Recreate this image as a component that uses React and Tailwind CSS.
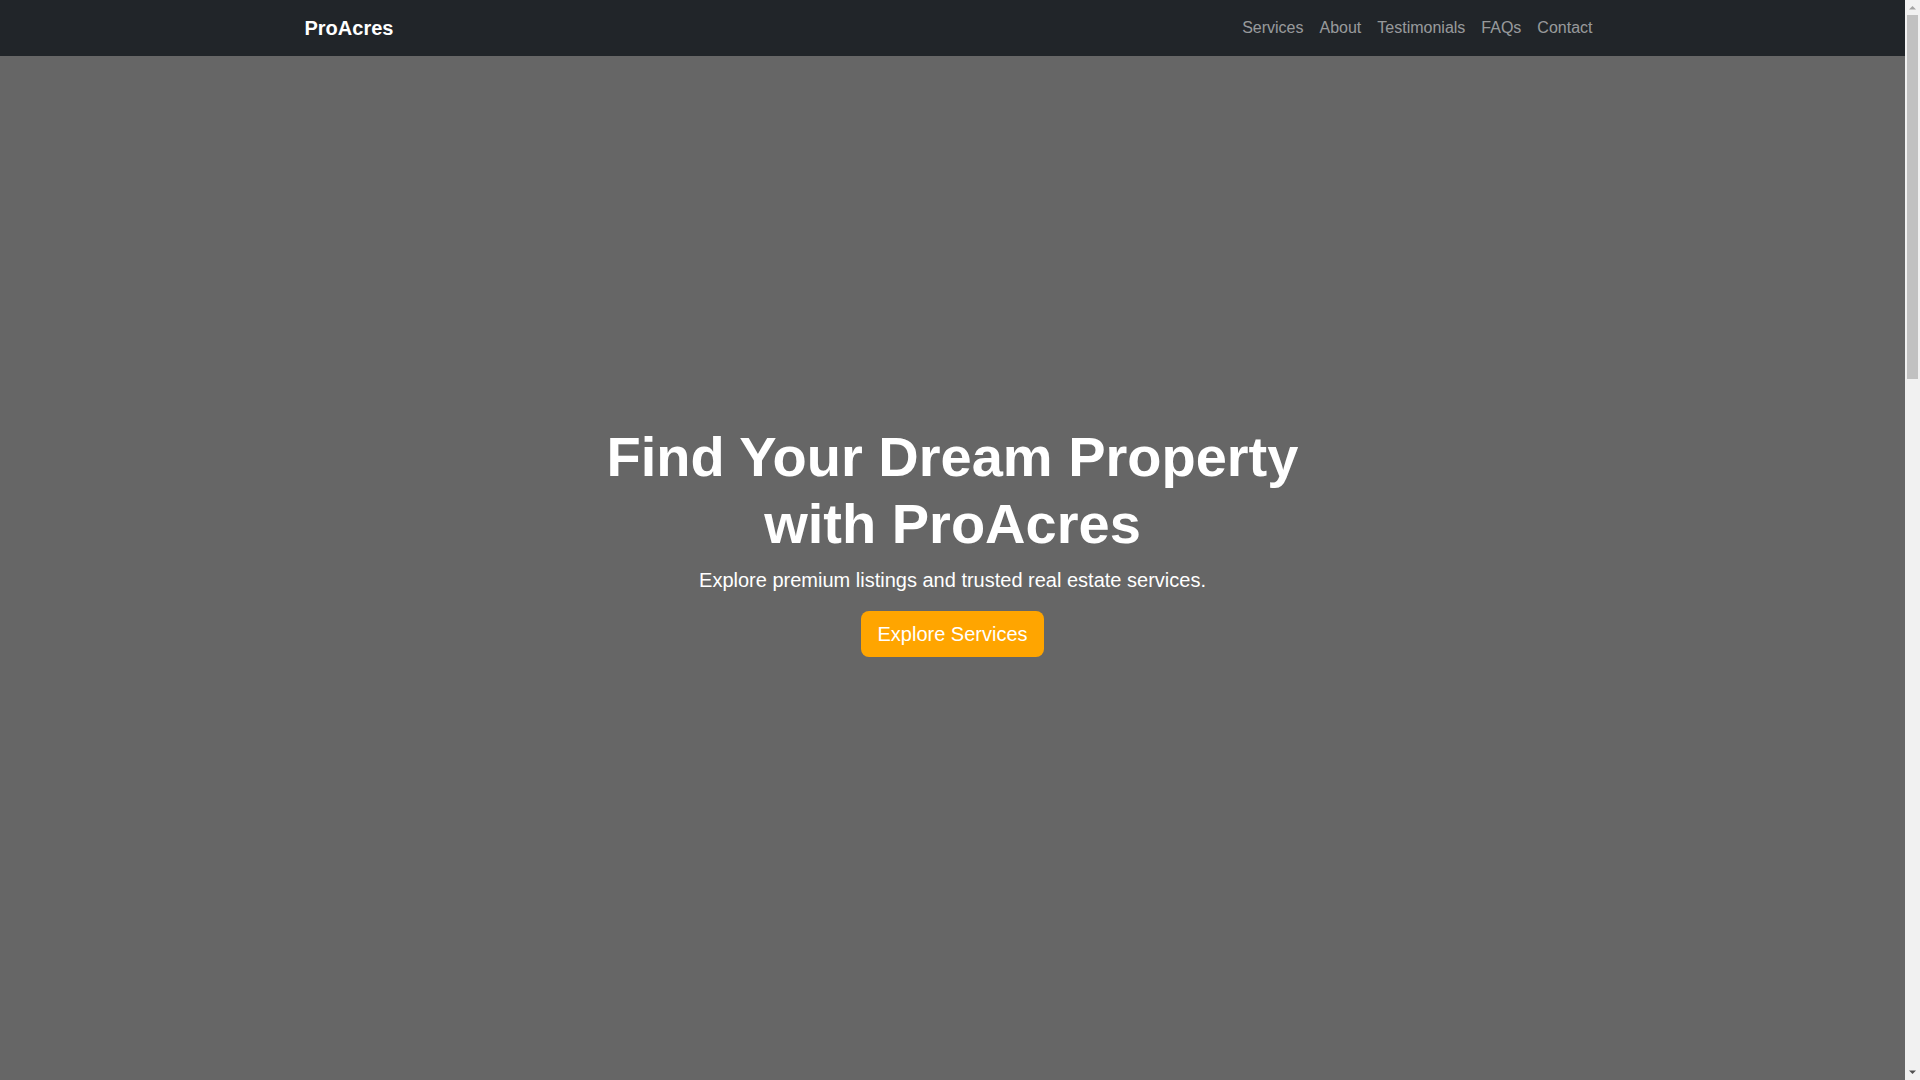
const navLinks = ['Services', 'About', 'Testimonials', 'FAQs', 'Contact'];

const services = [
  { title: 'Property Listings', text: 'Browse verified residential and commercial listings across prime locations.' },
  { title: 'Property Management', text: 'Hands-off ownership with tenant screening, rent collection and upkeep.' },
  { title: 'Legal Assistance', text: 'Clear documentation, title checks and registration support from experts.' },
];

const testimonials = [
  { name: 'Ananya R.', text: 'ProAcres made finding our first home simple and stress-free.' },
  { name: 'Vikram S.', text: 'Professional team, honest advice and great listings.' },
  { name: 'Meera K.', text: 'They handled every step of the paperwork for us.' },
];

const faqs = [
  { q: 'How do I schedule a site visit?', a: 'Contact us through the form below or call our office to book a visit.' },
  { q: 'Do you charge a brokerage fee?', a: 'Fees depend on the service. Our team will share details upfront.' },
  { q: 'Can you help with home loans?', a: 'Yes, we work with leading banks to help you get the best rates.' },
];

// the reference shows the browser's classic scrollbar, which takes 15px off the page width
const Scrollbar = () => (
  <div className="fixed top-0 right-0 bottom-0 z-20 w-[15px] bg-[#f1f1f1] flex flex-col items-center">
    <svg width="15" height="15" viewBox="0 0 15 15">
      <path d="M4 9.5 L7.5 6 L11 9.5 Z" fill="#a3a3a3" />
    </svg>
    <div className="w-[11px] h-[364px] bg-[#c1c1c1]"></div>
    <div className="flex-1"></div>
    <svg width="15" height="15" viewBox="0 0 15 15">
      <path d="M4 5.5 L7.5 9 L11 5.5 Z" fill="#505050" />
    </svg>
  </div>
);

const Navbar = () => (
  <nav className="fixed top-0 left-0 right-[15px] z-10 bg-[#212529] h-14">
    <div className="max-w-[1320px] mx-auto px-3 h-full flex items-center justify-between">
      <a className="text-white text-xl font-bold">ProAcres</a>
      <ul className="flex">
        {navLinks.map((link) => (
          <li key={link}>
            <a className="block px-2 py-2 text-base text-[rgba(255,255,255,0.55)]">{link}</a>
          </li>
        ))}
      </ul>
    </div>
  </nav>
);

const Hero = () => (
  <section className="h-[1080px] bg-[#666666] flex items-center justify-center text-center text-white">
    <div className="max-w-[720px] px-3">
      <h1 className="text-[56px] leading-[1.2] font-bold mb-2">Find Your Dream Property with ProAcres</h1>
      <p className="text-xl leading-[1.5] mb-4">Explore premium listings and trusted real estate services.</p>
      <a className="inline-block bg-[#ffa500] text-white text-xl leading-[1.5] px-4 py-2 rounded-lg">
        Explore Services
      </a>
    </div>
  </section>
);

const App = () => {
  return (
    <div className="font-['Liberation_Sans',Arial,sans-serif] text-[#212529] bg-white mr-[15px]">
      <Scrollbar />
      <Navbar />
      <Hero />

      <section className="py-20">
        <div className="max-w-[1320px] mx-auto px-3">
          <h2 className="text-[32px] font-bold text-center mb-10">Our Services</h2>
          <div className="grid grid-cols-3 gap-6">
            {services.map((s) => (
              <div key={s.title} className="border border-gray-200 rounded-md p-6 h-[220px]">
                <h3 className="text-xl font-bold mb-3">{s.title}</h3>
                <p className="text-gray-600">{s.text}</p>
              </div>
            ))}
          </div>
        </div>
      </section>

      <section className="py-20 bg-[#f8f9fa]">
        <div className="max-w-[1320px] mx-auto px-3 grid grid-cols-2 gap-12 items-center">
          <div className="h-[320px] bg-[#cccccc] rounded-md"></div>
          <div>
            <h2 className="text-[32px] font-bold mb-4">About ProAcres</h2>
            <p className="text-gray-600 mb-3">
              ProAcres is a trusted real estate partner helping families and investors find the right property.
            </p>
            <p className="text-gray-600">
              With years of experience and a deep local network, we bring transparency to every deal.
            </p>
          </div>
        </div>
      </section>

      <section className="py-20">
        <div className="max-w-[1320px] mx-auto px-3">
          <h2 className="text-[32px] font-bold text-center mb-10">Testimonials</h2>
          <div className="grid grid-cols-3 gap-6">
            {testimonials.map((t) => (
              <div key={t.name} className="bg-[#f8f9fa] rounded-md p-6 h-[200px]">
                <p className="italic text-gray-700 mb-4">"{t.text}"</p>
                <p className="font-bold">- {t.name}</p>
              </div>
            ))}
          </div>
        </div>
      </section>

      <section className="py-20 bg-[#f8f9fa]">
        <div className="max-w-[900px] mx-auto px-3">
          <h2 className="text-[32px] font-bold text-center mb-10">FAQs</h2>
          <div className="flex flex-col gap-4">
            {faqs.map((f) => (
              <div key={f.q} className="bg-white border border-gray-200 rounded-md p-5">
                <h3 className="font-bold mb-2">{f.q}</h3>
                <p className="text-gray-600">{f.a}</p>
              </div>
            ))}
          </div>
        </div>
      </section>

      <section className="py-20">
        <div className="max-w-[720px] mx-auto px-3">
          <h2 className="text-[32px] font-bold text-center mb-10">Contact Us</h2>
          <div className="flex flex-col gap-4">
            <div className="h-[38px] border border-gray-300 rounded-md"></div>
            <div className="h-[38px] border border-gray-300 rounded-md"></div>
            <div className="h-[120px] border border-gray-300 rounded-md"></div>
            <a className="self-start bg-[#ffa500] text-white px-3 py-1.5 rounded-md">Send Message</a>
          </div>
        </div>
      </section>

      <footer className="bg-[#212529] text-white text-center py-4">
        <p>&copy; 2024 ProAcres. All rights reserved.</p>
      </footer>
    </div>
  );
};

export default App;
